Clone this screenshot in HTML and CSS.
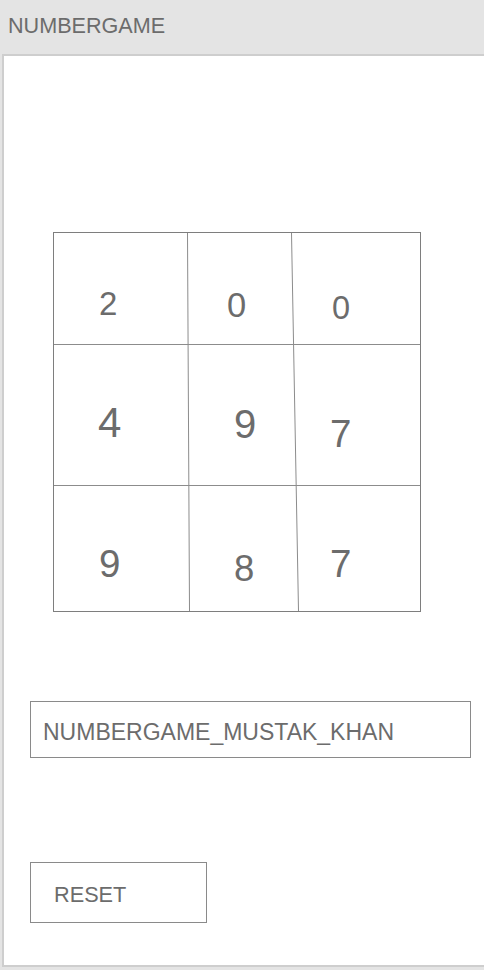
FILE: index.html
```html
<!DOCTYPE html>
<html>
<head>
<meta charset="utf-8">
<link rel="stylesheet" href="styles.css">
</head>
<body>
<header class="titlebar">NUMBERGAME</header>
<main class="panel">
  <div class="board">
    <svg class="lines" width="366" height="378" viewBox="0 0 366 378">
      <line x1="133.5" y1="0" x2="135.5" y2="378"/>
      <line x1="237.5" y1="0" x2="244.5" y2="378"/>
      <line x1="0" y1="111.5" x2="366" y2="111.5"/>
      <line x1="0" y1="252.5" x2="366" y2="252.5"/>
    </svg>
    <div class="cell c00">2</div>
    <div class="cell c01">0</div>
    <div class="cell c02">0</div>
    <div class="cell c10">4</div>
    <div class="cell c11">9</div>
    <div class="cell c12">7</div>
    <div class="cell c20">9</div>
    <div class="cell c21">8</div>
    <div class="cell c22">7</div>
  </div>
  <div class="namefield">NUMBERGAME_MUSTAK_KHAN</div>
  <div class="reset">RESET</div>
</main>
</body>
</html>
```
FILE: styles.css
```css
html, body {
  margin: 0;
  padding: 0;
}
body {
  width: 484px;
  height: 970px;
  background: #e4e4e4;
  font-family: "Liberation Sans", Arial, sans-serif;
  color: #6c6c6c;
  overflow: hidden;
}
.titlebar {
  height: 54px;
  line-height: 52px;
  padding-left: 8px;
  font-size: 21.6px;
  box-sizing: border-box;
}
.panel {
  margin-left: 2px;
  width: 482px;
  height: 913px;
  box-sizing: border-box;
  border: 2px solid #cecece;
  border-right: none;
  background: #fff;
  display: flex;
  flex-direction: column;
  align-items: flex-start;
}
.board {
  position: relative;
  margin-top: 176px;
  margin-left: 49px;
  border: 1px solid #7e7e7e;
  display: grid;
  grid-template-columns: 133px 106px 127px;
  grid-template-rows: 111px 141px 126px;
}
.lines {
  position: absolute;
  left: 0;
  top: 0;
  stroke: #8c8c8c;
  stroke-width: 1;
}
.cell {
  line-height: 1;
  box-sizing: border-box;
}
.c00 { font-size: 33px; padding: 54px 0 0 45px; }
.c01 { font-size: 34.5px; padding: 55px 0 0 40px; }
.c02 { font-size: 32.5px; padding: 59px 0 0 39px; }
.c10 { font-size: 42px; padding: 58px 0 0 44px; }
.c11 { font-size: 40px; padding: 60px 0 0 47px; }
.c12 { font-size: 38.5px; padding: 71px 0 0 37px; }
.c20 { font-size: 38.5px; padding: 60px 0 0 45px; }
.c21 { font-size: 36.5px; padding: 66px 0 0 47px; }
.c22 { font-size: 38.5px; padding: 60px 0 0 37px; }
.namefield {
  margin-top: 89px;
  margin-left: 26px;
  width: 441px;
  height: 57px;
  box-sizing: border-box;
  border: 1px solid #8a8a8a;
  padding: 19px 0 0 12px;
  font-size: 23px;
  line-height: 1;
}
.reset {
  margin-top: 104px;
  margin-left: 26px;
  width: 177px;
  height: 61px;
  box-sizing: border-box;
  border: 1px solid #8a8a8a;
  padding: 21px 0 0 23px;
  font-size: 21.7px;
  line-height: 1;
}
```
